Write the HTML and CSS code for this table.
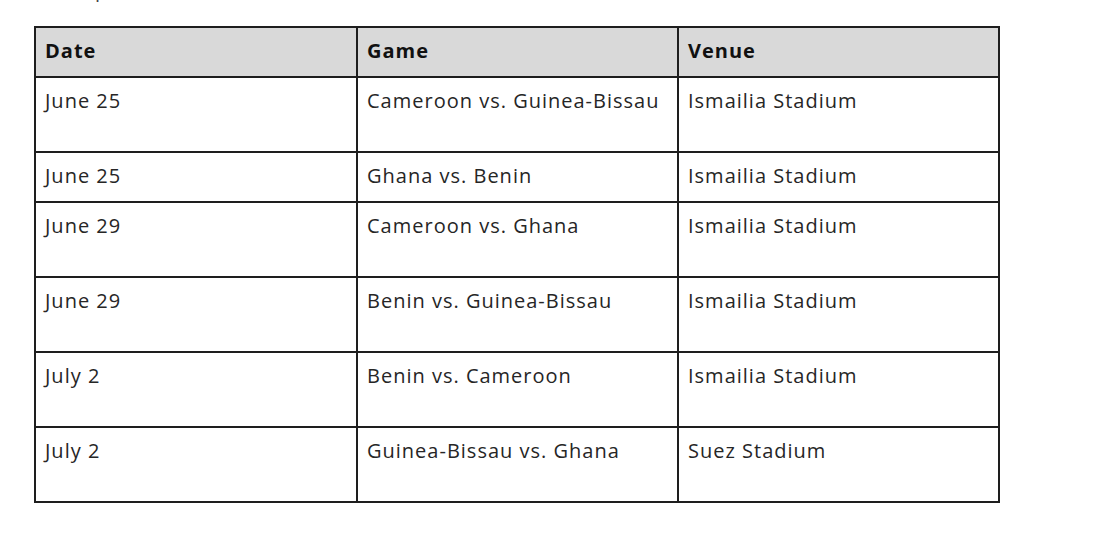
FILE: index.html
```html
<!DOCTYPE html>
<html>
<head>
<meta charset="utf-8">
<link rel="stylesheet" href="styles.css">
</head>
<body>
<div class="page">
  <p class="caption">Group C</p>
  <table class="fixtures">
    <colgroup>
      <col class="col-date">
      <col class="col-game">
      <col class="col-venue">
    </colgroup>
    <thead>
      <tr><th>Date</th><th>Game</th><th>Venue</th></tr>
    </thead>
    <tbody>
      <tr class="tall"><td>June 25</td><td>Cameroon vs. Guinea-Bissau</td><td>Ismailia Stadium</td></tr>
      <tr class="short"><td>June 25</td><td>Ghana vs. Benin</td><td>Ismailia Stadium</td></tr>
      <tr class="tall"><td>June 29</td><td>Cameroon vs. Ghana</td><td>Ismailia Stadium</td></tr>
      <tr class="tall"><td>June 29</td><td>Benin vs. Guinea-Bissau</td><td>Ismailia Stadium</td></tr>
      <tr class="tall"><td>July 2</td><td>Benin vs. Cameroon</td><td>Ismailia Stadium</td></tr>
      <tr class="tall"><td>July 2</td><td>Guinea-Bissau vs. Ghana</td><td>Suez Stadium</td></tr>
    </tbody>
  </table>
</div>
</body>
</html>
```

FILE: styles.css
```css
html, body {
  margin: 0;
  padding: 0;
  background: #ffffff;
}
.page {
  width: 1120px;
  height: 535px;
  overflow: hidden;
  padding-left: 34px;
  box-sizing: border-box;
  font-family: "Open Sans", "Liberation Sans", sans-serif;
  color: #262626;
}
.caption {
  margin: -22px 0 0 10px;
  height: 24px;
  font-size: 20px;
  line-height: 24px;
  letter-spacing: 1px;
  color: #444;
}
.fixtures {
  margin-top: 24px;
  border-collapse: collapse;
  width: 964px;
  table-layout: fixed;
  font-size: 20px;
  letter-spacing: 1px;
}
.col-date { width: 322px; }
.col-game { width: 321px; }
.col-venue { width: 321px; }
.fixtures th,
.fixtures td {
  border: 2px solid #1e1e1e;
  text-align: left;
  vertical-align: top;
  padding: 11px 8px 0 9px;
  line-height: 24px;
  box-sizing: border-box;
}
.fixtures th {
  background: #d9d9d9;
  font-weight: 700;
  height: 50px;
  color: #111;
}
.fixtures tr.tall td { height: 75px; }
.fixtures tr.short td { height: 50px; }
```
